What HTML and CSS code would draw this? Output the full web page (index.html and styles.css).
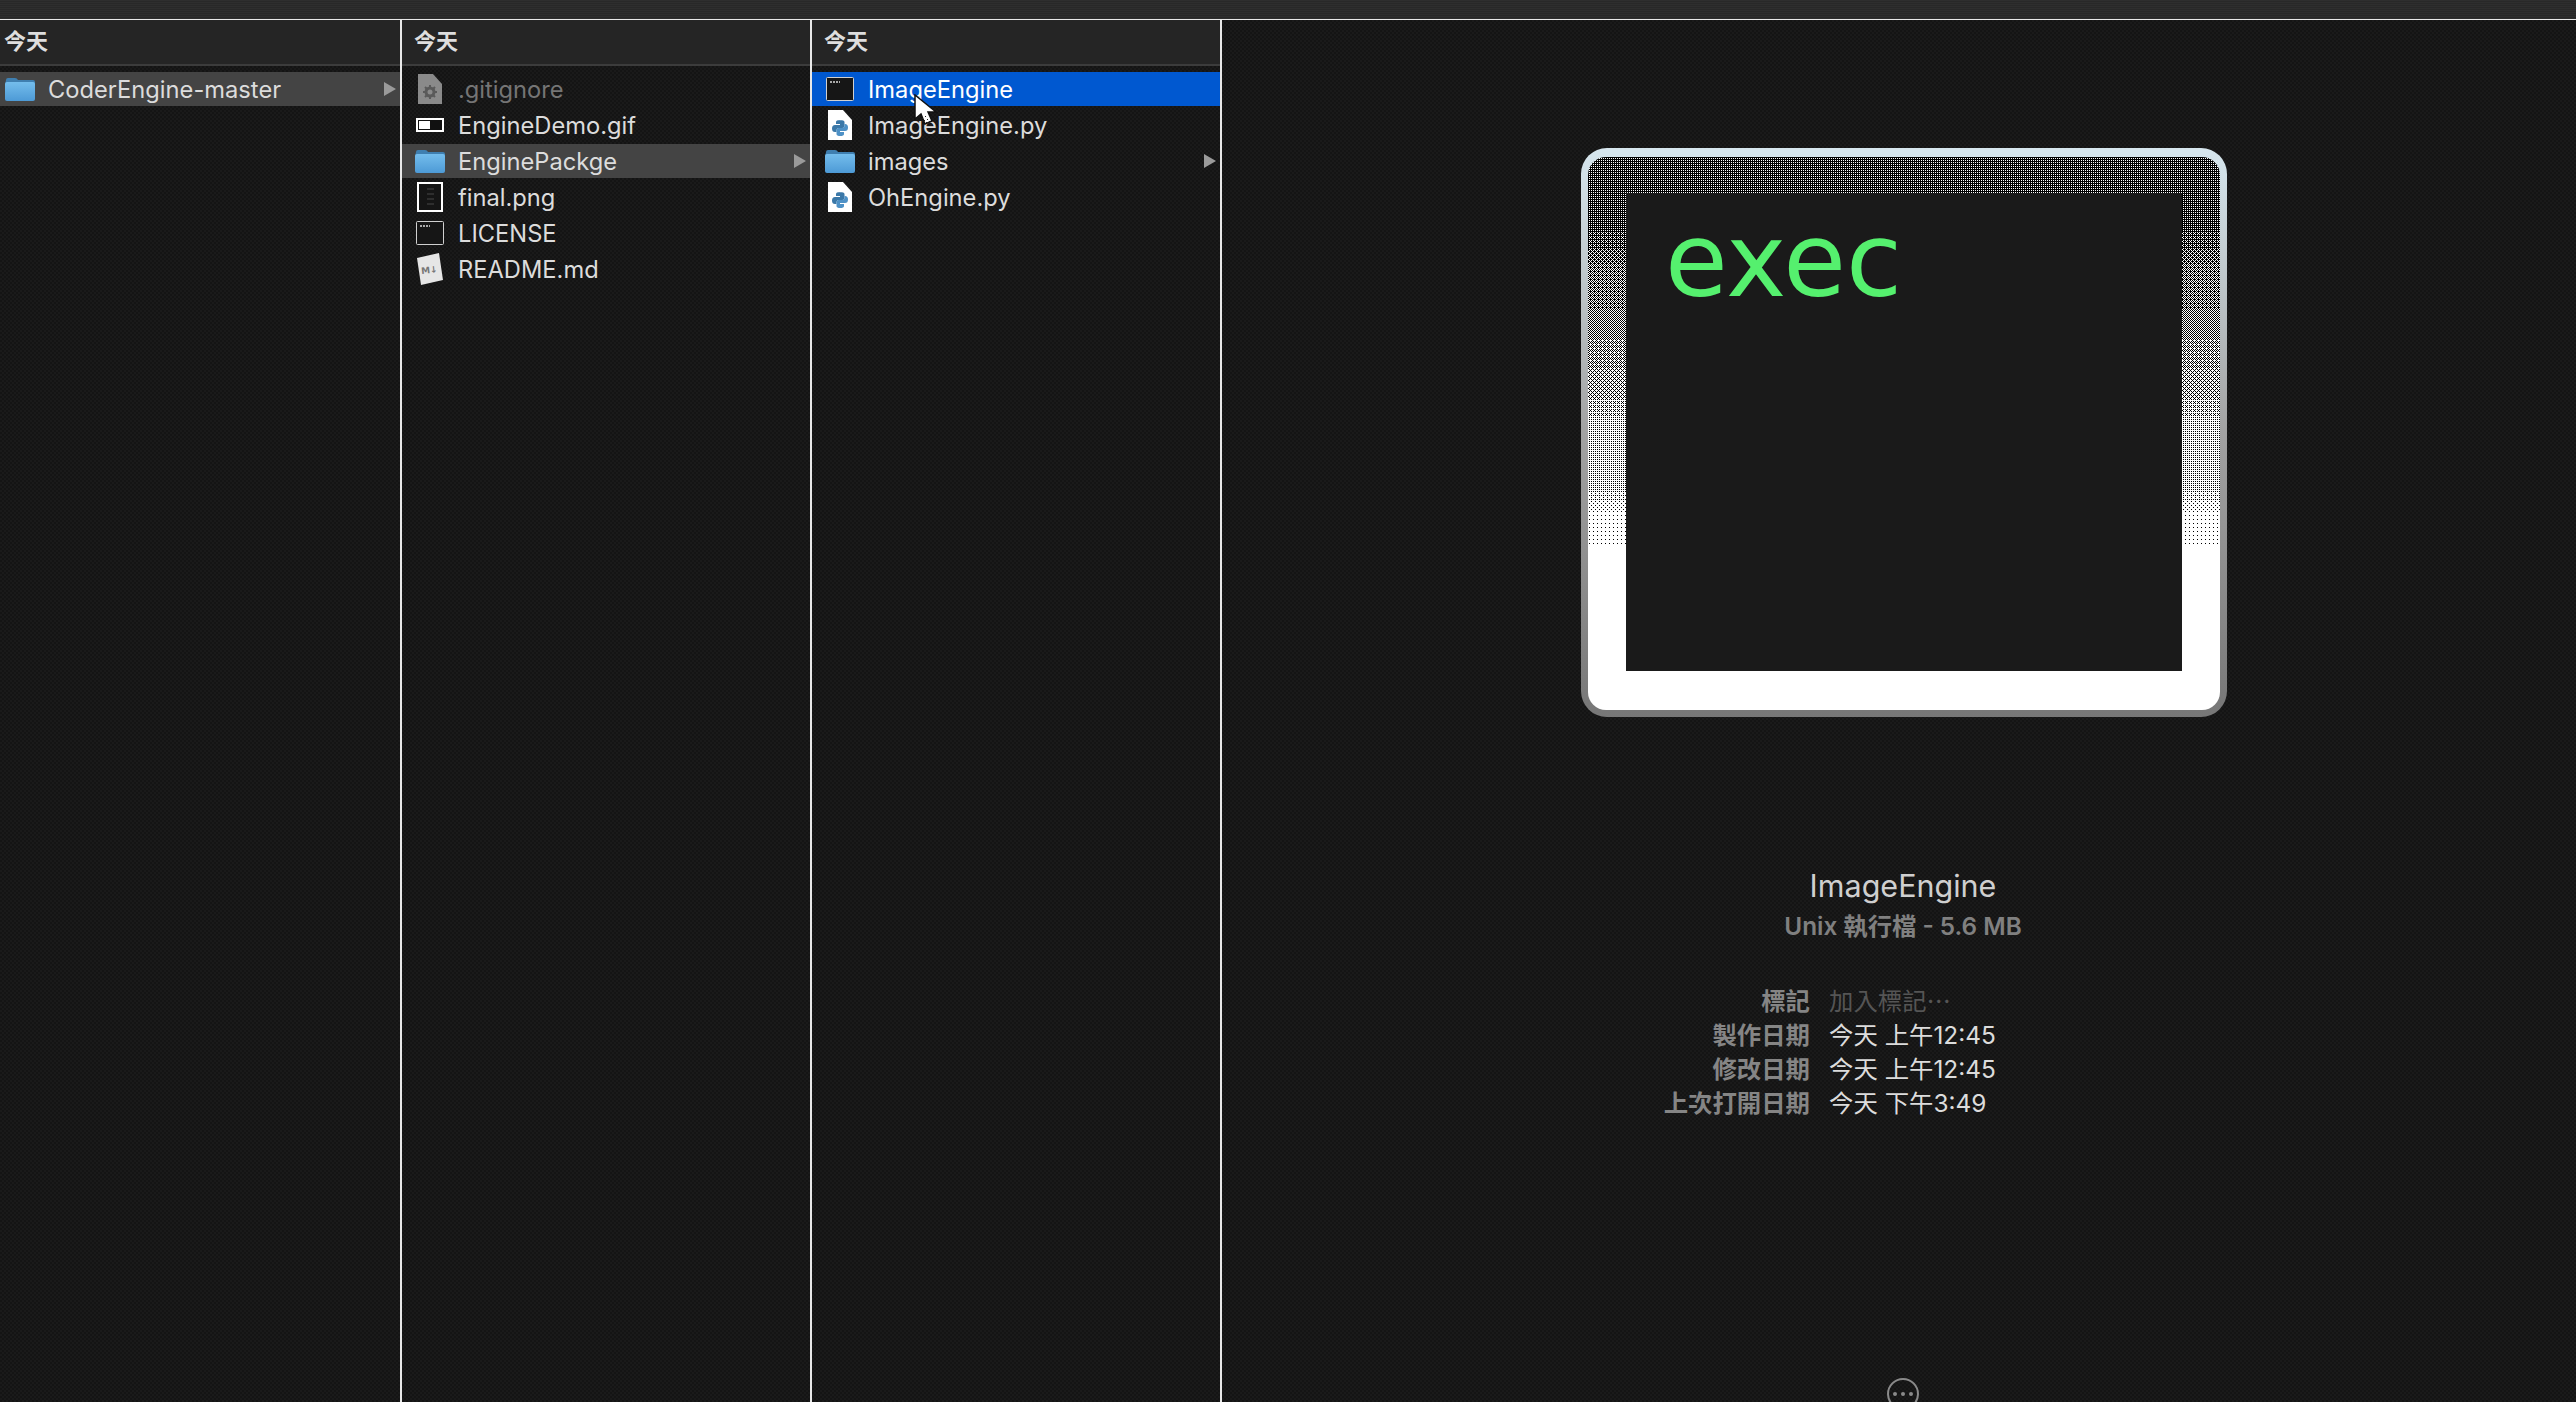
FILE: index.html
```html
<!DOCTYPE html>
<html lang="zh-Hant">
<head>
<meta charset="utf-8">
<title>Finder</title>
<link rel="stylesheet" href="styles.css">
</head>
<body>
<svg class="defs" width="0" height="0" aria-hidden="true">
  <defs>
    <linearGradient id="folderBody" x1="0" y1="0" x2="0" y2="1"><stop offset="0" stop-color="#74bdec"/><stop offset="1" stop-color="#4d9ad6"/></linearGradient>
    <linearGradient id="frameGrad" x1="0" y1="0" x2="0" y2="1"><stop offset="0" stop-color="#d6e6ee"/><stop offset=".18" stop-color="#c4ced2"/><stop offset=".5" stop-color="#a2a2a2"/><stop offset="1" stop-color="#777"/></linearGradient>
    <symbol id="i-folder" viewBox="0 0 30 24"><path d="M1 3q0-2 2-2h7q2 0 3 2h15q2 0 2 2v3H0z" fill="#3f7fb0"/><rect y="5" width="30" height="19" rx="2" fill="url(#folderBody)"/></symbol>
    <symbol id="i-config" viewBox="0 0 24 30"><path d="M0 0h15l9 10v20H0z" fill="#8a8a8a"/><circle cx="12" cy="18" r="4" fill="none" stroke="#5a5a5a" stroke-width="3"/><path d="M12 11v3M12 22v3M5 18h3M16 18h3M7 13l2 2M15 21l2 2M17 13l-2 2M9 21l-2 2" stroke="#5a5a5a" stroke-width="2"/></symbol>
    <symbol id="i-gif" viewBox="0 0 28 14"><rect x="1" y="1" width="26" height="12" fill="#111" stroke="#fff" stroke-width="2"/><rect x="3" y="3" width="11" height="8" fill="#fff"/></symbol>
    <symbol id="i-png" viewBox="0 0 26 30"><rect x="1" y="1" width="24" height="28" fill="#151515" stroke="#fff" stroke-width="2"/><path d="M10 7h7M10 12h7M10 17h7M10 22h7" stroke="#2e2e2e" stroke-width="2"/></symbol>
    <symbol id="i-exec" viewBox="0 0 28 24"><rect x=".5" y=".5" width="27" height="23" rx="1" fill="#161616" stroke="#d0d0d0"/><path d="M4 5h10" stroke="#aaa" stroke-width="2" stroke-dasharray="2 1"/></symbol>
    <symbol id="i-md" viewBox="0 0 28 32"><path d="M1 5l22-5 4 27-22 5z" fill="#e6e6e6"/><text class="md-glyph" x="5" y="20" transform="rotate(-6 14 16)">M↓</text></symbol>
    <symbol id="i-py" viewBox="0 0 24 30"><path d="M0 0h15l9 10v20H0z" fill="#fff"/><path d="M12 10q-4 0-4 2v2h4v1H7q-3 0-3 3.500t3 3.500h1.500v-2q0-2 2.500-2h3.500q2 0 2-2v-4q0-2-5-2z" fill="#3b78a8"/><path d="M12 26q4 0 4-2v-2h-4v-1h5q3 0 3-3.500t-3-3.500h-.5v2q0 2-2.500 2h-3.500q-2 0-2 2v4q0 2 4 2z" fill="#4e91c6"/></symbol>
    <symbol id="i-arrow" viewBox="0 0 12 14"><path d="M0 0l12 7-12 7z" fill="#9a9a9a"/></symbol>
    <path id="d4" d="M0 0h1v1H0zM2 0h1v1H2zM0 2h1v1H0zM2 2h1v1H2z" fill="#fff"/>
    <path id="d5" d="M1 1h1v1H1z" fill="#fff"/>
    <path id="d6" d="M3 3h1v1H3z" fill="#fff"/>
    <path id="d7" d="M3 1h1v1H3z" fill="#fff"/>
    <path id="d8" d="M1 3h1v1H1z" fill="#fff"/>
    <path id="d9" d="M1 0h1v1H1z" fill="#fff"/>
    <path id="d10" d="M3 2h1v1H3z" fill="#fff"/>
    <path id="d11" d="M3 0h1v1H3z" fill="#fff"/>
    <path id="d12" d="M1 2h1v1H1z" fill="#fff"/>
    <path id="d13" d="M0 1h1v1H0z" fill="#fff"/>
    <path id="d14" d="M2 3h1v1H2z" fill="#fff"/>
    <path id="d15" d="M2 1h1v1H2z" fill="#fff"/>
    <g id="g8"><use href="#d4"/><use href="#d5"/><use href="#d6"/><use href="#d7"/><use href="#d8"/></g>
    <g id="g12"><use href="#g8"/><use href="#d9"/><use href="#d10"/><use href="#d11"/><use href="#d12"/></g>
    <pattern id="L4" width="4" height="4" patternUnits="userSpaceOnUse"><rect width="4" height="4"/><use href="#d4"/></pattern>
    <pattern id="L5" width="4" height="4" patternUnits="userSpaceOnUse"><rect width="4" height="4"/><use href="#d4"/><use href="#d5"/></pattern>
    <pattern id="L6" width="4" height="4" patternUnits="userSpaceOnUse"><rect width="4" height="4"/><use href="#d4"/><use href="#d5"/><use href="#d6"/></pattern>
    <pattern id="L7" width="4" height="4" patternUnits="userSpaceOnUse"><rect width="4" height="4"/><use href="#d4"/><use href="#d5"/><use href="#d6"/><use href="#d7"/></pattern>
    <pattern id="L8" width="4" height="4" patternUnits="userSpaceOnUse"><rect width="4" height="4"/><use href="#g8"/></pattern>
    <pattern id="L9" width="4" height="4" patternUnits="userSpaceOnUse"><rect width="4" height="4"/><use href="#g8"/><use href="#d9"/></pattern>
    <pattern id="L10" width="4" height="4" patternUnits="userSpaceOnUse"><rect width="4" height="4"/><use href="#g8"/><use href="#d9"/><use href="#d10"/></pattern>
    <pattern id="L11" width="4" height="4" patternUnits="userSpaceOnUse"><rect width="4" height="4"/><use href="#g8"/><use href="#d9"/><use href="#d10"/><use href="#d11"/></pattern>
    <pattern id="L12" width="4" height="4" patternUnits="userSpaceOnUse"><rect width="4" height="4"/><use href="#g12"/></pattern>
    <pattern id="L13" width="4" height="4" patternUnits="userSpaceOnUse"><rect width="4" height="4"/><use href="#g12"/><use href="#d13"/></pattern>
    <pattern id="L14" width="4" height="4" patternUnits="userSpaceOnUse"><rect width="4" height="4"/><use href="#g12"/><use href="#d13"/><use href="#d14"/></pattern>
    <pattern id="L15" width="4" height="4" patternUnits="userSpaceOnUse"><rect width="4" height="4"/><use href="#g12"/><use href="#d13"/><use href="#d14"/><use href="#d15"/></pattern>
    <clipPath id="innerClip"><rect x="7" y="9" width="632" height="553" rx="18"/></clipPath>
  </defs>
</svg>

<div class="titlebar"></div>
<main class="browser">
  <section class="col col-first">
    <header class="col-head">今天</header>
    <ul class="rows">
      <li class="row row-active"><span class="slot"><svg class="ic-folder"><use href="#i-folder"/></svg></span><span class="name">CoderEngine-master</span><svg class="disclosure"><use href="#i-arrow"/></svg></li>
    </ul>
  </section>
  <section class="col">
    <header class="col-head">今天</header>
    <ul class="rows">
      <li class="row"><span class="slot"><svg class="ic-doc"><use href="#i-config"/></svg></span><span class="name name-dim">.gitignore</span></li>
      <li class="row"><span class="slot"><svg class="ic-gif"><use href="#i-gif"/></svg></span><span class="name">EngineDemo.gif</span></li>
      <li class="row row-active"><span class="slot"><svg class="ic-folder"><use href="#i-folder"/></svg></span><span class="name">EnginePackge</span><svg class="disclosure"><use href="#i-arrow"/></svg></li>
      <li class="row"><span class="slot"><svg class="ic-png"><use href="#i-png"/></svg></span><span class="name">final.png</span></li>
      <li class="row"><span class="slot"><svg class="ic-exec"><use href="#i-exec"/></svg></span><span class="name">LICENSE</span></li>
      <li class="row"><span class="slot"><svg class="ic-md"><use href="#i-md"/></svg></span><span class="name">README.md</span></li>
    </ul>
  </section>
  <section class="col">
    <header class="col-head">今天</header>
    <ul class="rows">
      <li class="row row-selected"><span class="slot"><svg class="ic-exec"><use href="#i-exec"/></svg></span><span class="name">ImageEngine</span></li>
      <li class="row"><span class="slot"><svg class="ic-doc"><use href="#i-py"/></svg></span><span class="name">ImageEngine.py</span></li>
      <li class="row"><span class="slot"><svg class="ic-folder"><use href="#i-folder"/></svg></span><span class="name">images</span><svg class="disclosure"><use href="#i-arrow"/></svg></li>
      <li class="row"><span class="slot"><svg class="ic-doc"><use href="#i-py"/></svg></span><span class="name">OhEngine.py</span></li>
    </ul>
  </section>
  <aside class="preview">
    <svg class="big-icon" viewBox="0 0 646 569" width="646" height="569">
      <rect width="646" height="569" rx="26" fill="url(#frameGrad)"/>
      <g clip-path="url(#innerClip)">
        <rect x="7" y="397" width="632" height="165" fill="#fff"/>
        <rect x="7" y="9" width="632" height="76" fill="url(#L4)"/>
        <rect x="7" y="85" width="632" height="15" fill="url(#L5)"/>
        <rect x="7" y="100" width="632" height="15" fill="url(#L6)"/>
        <rect x="7" y="115" width="632" height="47" fill="url(#L7)"/>
        <rect x="7" y="162" width="632" height="30" fill="url(#L8)"/>
        <rect x="7" y="192" width="632" height="30" fill="url(#L9)"/>
        <rect x="7" y="222" width="632" height="30" fill="url(#L10)"/>
        <rect x="7" y="252" width="632" height="18" fill="url(#L11)"/>
        <rect x="7" y="270" width="632" height="72" fill="url(#L12)"/>
        <rect x="7" y="342" width="632" height="11" fill="url(#L13)"/>
        <rect x="7" y="353" width="632" height="11" fill="url(#L14)"/>
        <rect x="7" y="364" width="632" height="33" fill="url(#L15)"/>
      </g>
      <rect x="45" y="45" width="556" height="478" fill="#1a1a1a"/>
      <text class="exec-label" x="84" y="148">exec</text>
    </svg>
    <h1 class="file-name">ImageEngine</h1>
    <p class="file-kind">Unix 執行檔 - 5.6 MB</p>
    <dl class="meta">
      <dt>標記</dt><dd class="meta-empty">加入標記⋯</dd>
      <dt>製作日期</dt><dd>今天 上午12:45</dd>
      <dt>修改日期</dt><dd>今天 上午12:45</dd>
      <dt>上次打開日期</dt><dd>今天 下午3:49</dd>
    </dl>
    <svg class="more" viewBox="0 0 32 32" width="32" height="32"><circle cx="16" cy="16" r="15" fill="none" stroke="#8a8a8a" stroke-width="2"/><circle cx="8" cy="16" r="2" fill="#8a8a8a"/><circle cx="16" cy="16" r="2" fill="#8a8a8a"/><circle cx="24" cy="16" r="2" fill="#8a8a8a"/></svg>
  </aside>
</main>
<svg class="cursor" viewBox="0 0 26 38" width="26" height="38"><path d="M3 1v24l6-5 4 10 7-3-4-9h8z" fill="#fff" stroke="#111" stroke-width="1.500"/><path d="M10 24h1v1h-1zM13 22h1v1h-1zM12 26h1v1h-1zM15 25h1v1h-1zM14 28h1v1h-1zM17 27h1v1h-1z" fill="#222"/></svg>
</body>
</html>
```
FILE: styles.css
```css
* { box-sizing: border-box; }
html, body { margin: 0; padding: 0; height: 100%; }
body {
  position: relative;
  width: 2576px;
  height: 1402px;
  overflow: hidden;
  background: #171717;
  font-family: Inter, "Noto Sans CJK TC", sans-serif;
  color: #dcdcdc;
}
.defs { position: absolute; }
.titlebar {
  height: 20px;
  background: repeating-linear-gradient(180deg, #2e2e2e 0 1px, #282828 1px 2px);
  border-bottom: 1px solid #e8e8e8;
}
.browser { display: flex; height: 1382px; }
.col {
  --inset: 8px;
  flex: 0 0 410px;
  border-right: 2px solid #e8e8e8;
  background-color: #171717;
  background-image: conic-gradient(#1a1a1a 25%, #141414 0 50%, #1a1a1a 0 75%, #141414 0);
  background-size: 4px 4px;
}
.col-first { --inset: 0px; flex-basis: 402px; }
.col-head {
  height: 46px;
  padding-left: calc(var(--inset) + 4px);
  padding-bottom: 6px;
  display: flex;
  align-items: center;
  font-size: 22px;
  font-weight: 700;
  font-family: "Noto Sans CJK TC", sans-serif;
  color: #dedede;
  background: #252525;
  border-bottom: 2px solid #3c3c3c;
}
.rows { list-style: none; margin: 6px 0 0; padding: 0; }
.row {
  height: 34px;
  margin-bottom: 2px;
  padding-left: var(--inset);
  display: flex;
  align-items: center;
  position: relative;
}
.row-active { background: #444; }
.row-selected { background: #0058d0; color: #fff; }
.slot { flex: 0 0 40px; display: flex; justify-content: center; align-items: center; height: 34px; margin-right: 8px; }
.slot svg { flex: none; display: block; }
.name { font-size: 23.700px; letter-spacing: 0; white-space: nowrap; }
.name-dim { color: #757575; }
.disclosure { width: 12px; height: 14px; margin-left: auto; margin-right: 4px; }
.ic-folder { width: 30px; height: 24px; }
.ic-doc { width: 24px; height: 30px; }
.ic-gif { width: 28px; height: 14px; }
.ic-png { width: 26px; height: 30px; }
.ic-exec { width: 28px; height: 24px; }
.ic-md { width: 28px; height: 32px; }
.md-glyph { font-family: "DejaVu Sans", sans-serif; font-size: 9px; font-weight: 700; fill: #777; }
.preview {
  flex: 1;
  padding: 128px 0 0 8px;
  display: flex;
  flex-direction: column;
  align-items: center;
  background-color: #171717;
  background-image: conic-gradient(#1a1a1a 25%, #141414 0 50%, #1a1a1a 0 75%, #141414 0);
  background-size: 4px 4px;
}
.big-icon { flex: none; display: block; margin-left: 2px; }
.exec-label { font-family: "DejaVu Sans", sans-serif; font-size: 102px; fill: #55f06e; }
.file-name {
  margin: 151px 0 0;
  font-size: 30.500px;
  line-height: 36px;
  font-weight: 400;
  color: #cfcfcf;
}
.file-kind {
  margin: 6px 0 0;
  font-size: 24.300px;
  line-height: 32px;
  font-weight: 600;
  color: #808080;
}
.meta {
  align-self: stretch;
  display: grid;
  grid-template-columns: 580px 1fr;
  column-gap: 19px;
  grid-auto-rows: 34px;
  margin: 42px 0 0;
  font-size: 24.400px;
  line-height: 34px;
}
.meta dt { text-align: right; color: #858585; font-weight: 600; }
.meta dd { margin: 0; color: #dcdcdc; }
.meta .meta-empty { color: #555; }
.more { flex: none; margin-top: 258px; }
.cursor { position: absolute; left: 912px; top: 94px; }
```
